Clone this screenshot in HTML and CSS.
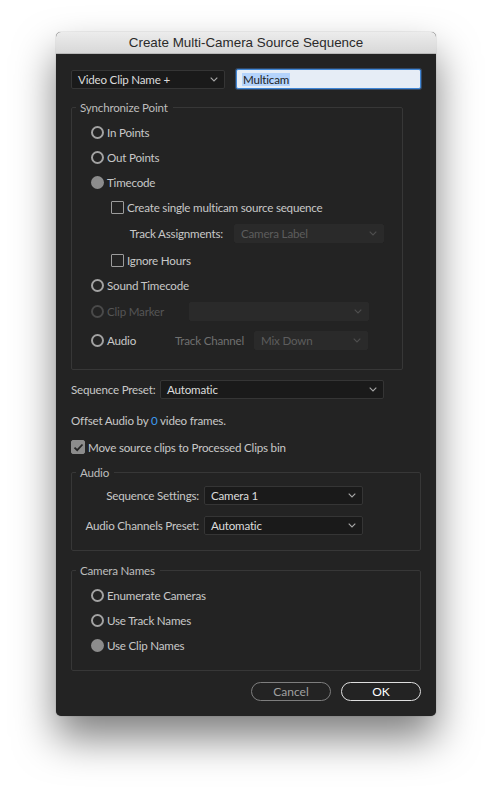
FILE: index.html
```html
<!DOCTYPE html>
<html>
<head>
<meta charset="utf-8">
<link rel="stylesheet" href="styles.css">
</head>
<body>
<div class="dialog">
  <div class="titlebar">Create Multi-Camera Source Sequence</div>
  <div class="content">
    <div class="toprow">
      <div class="select sel-name"><span>Video Clip Name +</span><svg class="chev" width="8" height="5" viewBox="0 0 8 5"><path d="M0.7 0.7 L4 4 L7.3 0.7"/></svg></div>
      <div class="textfield"><span class="hl">Multicam</span></div>
    </div>

    <div class="group sync">
      <span class="legend">Synchronize Point</span>
      <div class="row r25"><span class="radio"></span><span class="lbl">In Points</span></div>
      <div class="row r25"><span class="radio"></span><span class="lbl">Out Points</span></div>
      <div class="row r25"><span class="radio on"></span><span class="lbl">Timecode</span></div>
      <div class="row r25 indent"><span class="check"></span><span class="lbl">Create single multicam source sequence</span></div>
      <div class="row r27 indent">
        <span class="lbl trk-lbl">Track Assignments:</span>
        <div class="select disabled sel-trk"><span>Camera Label</span><svg class="chev" width="8" height="5" viewBox="0 0 8 5"><path d="M0.7 0.7 L4 4 L7.3 0.7"/></svg></div>
      </div>
      <div class="row r26 indent"><span class="check"></span><span class="lbl">Ignore Hours</span></div>
      <div class="row r25"><span class="radio"></span><span class="lbl">Sound Timecode</span></div>
      <div class="row r26">
        <span class="rl w98"><span class="radio off"></span><span class="lbl dim">Clip Marker</span></span>
        <div class="select disabled sel-clip"><span></span><svg class="chev" width="8" height="5" viewBox="0 0 8 5"><path d="M0.7 0.7 L4 4 L7.3 0.7"/></svg></div>
      </div>
      <div class="row r32">
        <span class="rl w84"><span class="radio"></span><span class="lbl">Audio</span></span>
        <span class="lbl dim2 w79">Track Channel</span>
        <div class="select disabled sel-mix"><span>Mix Down</span><svg class="chev" width="8" height="5" viewBox="0 0 8 5"><path d="M0.7 0.7 L4 4 L7.3 0.7"/></svg></div>
      </div>
    </div>

    <div class="line preset">
      <span class="lbl w89">Sequence Preset:</span>
      <div class="select sel-preset"><span>Automatic</span><svg class="chev" width="8" height="5" viewBox="0 0 8 5"><path d="M0.7 0.7 L4 4 L7.3 0.7"/></svg></div>
    </div>

    <div class="line offset"><span class="lbl">Offset Audio by <span class="num">0</span> video frames.</span></div>

    <div class="line movebin"><span class="check checked"><svg width="11" height="9" viewBox="0 0 11 9"><path d="M1.5 4.6 L4.2 7.2 L9.5 1.5"/></svg></span><span class="lbl">Move source clips to Processed Clips bin</span></div>

    <div class="group audio">
      <span class="legend">Audio</span>
      <div class="frow">
        <span class="lbl flbl">Sequence Settings:</span>
        <div class="select sel-aud"><span>Camera 1</span><svg class="chev" width="8" height="5" viewBox="0 0 8 5"><path d="M0.7 0.7 L4 4 L7.3 0.7"/></svg></div>
      </div>
      <div class="frow">
        <span class="lbl flbl">Audio Channels Preset:</span>
        <div class="select sel-aud"><span>Automatic</span><svg class="chev" width="8" height="5" viewBox="0 0 8 5"><path d="M0.7 0.7 L4 4 L7.3 0.7"/></svg></div>
      </div>
    </div>

    <div class="group cams">
      <span class="legend">Camera Names</span>
      <div class="row r25"><span class="radio"></span><span class="lbl">Enumerate Cameras</span></div>
      <div class="row r25"><span class="radio"></span><span class="lbl">Use Track Names</span></div>
      <div class="row r25"><span class="radio on"></span><span class="lbl">Use Clip Names</span></div>
    </div>

    <div class="buttons">
      <div class="btn cancel">Cancel</div>
      <div class="btn ok">OK</div>
    </div>
  </div>
</div>
</body>
</html>
```

FILE: styles.css
```css
html, body {
  margin: 0;
  padding: 0;
  background: #ffffff;
}
body {
  width: 492px;
  height: 796px;
  overflow: hidden;
  font-family: Lato, "Open Sans", sans-serif;
  font-size: 11.6px;
  letter-spacing: -0.2px;
}
.dialog {
  margin: 32px 0 0 56px;
  width: 380px;
  height: 684px;
  background: #232323;
  border-radius: 5px;
  box-shadow: 0 22px 40px rgba(0,0,0,0.5), 0 0 1px rgba(0,0,0,0.5);
  overflow: hidden;
  display: flex;
  flex-direction: column;
}
.titlebar {
  height: 22px;
  flex: none;
  background: linear-gradient(#ececec, #d8d8d8);
  border-bottom: 1px solid #b8b8b8;
  box-sizing: border-box;
  text-align: center;
  line-height: 22px;
  font-family: "Liberation Sans", Arial, sans-serif;
  font-size: 13.4px;
  letter-spacing: 0;
  color: #2a2a2a;
}
.content {
  padding: 15px 15px 0 15px;
  display: flex;
  flex-direction: column;
}
.toprow {
  display: flex;
  align-items: center;
  height: 20px;
}
.select {
  box-sizing: border-box;
  height: 19px;
  background: #1a1a1a;
  border: 1px solid #353535;
  border-radius: 2px;
  display: flex;
  align-items: center;
  justify-content: space-between;
  padding: 0 6px 0 6px;
  color: #dcdcdc;
}
.select span { white-space: nowrap; }
.chev { flex: none; }
.chev path {
  fill: none;
  stroke: #a8a8a8;
  stroke-width: 1.1;
}
.select.disabled {
  background: #2a2a2a;
  border-color: #2a2a2a;
  color: #5d5d5d;
}
.select.disabled .chev path { stroke: #4f4f4f; }
.sel-name { width: 154px; }
.textfield {
  box-sizing: border-box;
  margin-left: 11px;
  width: 185px;
  height: 20px;
  background: #e6edf6;
  border: 1px solid #3f86d6;
  border-radius: 2px;
  box-shadow: 0 0 0 1px rgba(80,140,220,0.35);
  display: flex;
  align-items: center;
  padding-left: 5px;
  color: #1d1d1d;
}
.hl { background: #b4d3fb; padding: 0 1px; }

.group {
  position: relative;
  box-sizing: border-box;
  border: 1px solid #373737;
  border-radius: 2px;
  display: flex;
  flex-direction: column;
}
.legend {
  position: absolute;
  top: -8px;
  left: 4px;
  padding: 0 5px 0 4px;
  background: #232323;
  color: #bdbdbd;
  line-height: 15px;
}
.sync {
  margin-top: 18px;
  width: 332px;
  height: 263px;
  padding: 12px 0 0 19px;
}
.row {
  display: flex;
  align-items: center;
}
.r25 { height: 25px; }
.r26 { height: 26px; }
.r27 { height: 27px; }
.r32 { height: 32px; }
.indent { padding-left: 20px; }
.lbl {
  color: #c8c8c8;
  white-space: nowrap;
}
.dim { color: #555555; }
.dim2 { color: #707070; }
.radio {
  flex: none;
  box-sizing: border-box;
  width: 13px;
  height: 13px;
  border-radius: 50%;
  border: 2px solid #a2a2a2;
  margin-right: 3px;
}
.radio.on {
  background: #8c8c8c;
  border-color: #8c8c8c;
}
.radio.off { border-color: #4a4a4a; }
.check {
  flex: none;
  box-sizing: border-box;
  width: 13px;
  height: 13px;
  border: 1.5px solid #9c9c9c;
  border-radius: 1px;
  margin-right: 3px;
  display: flex;
  align-items: center;
  justify-content: center;
}
.check.checked {
  width: 14px;
  height: 14px;
  background: #8c8c8c;
  border-color: #8c8c8c;
  border-radius: 2px;
}
.check svg path {
  fill: none;
  stroke: #262626;
  stroke-width: 1.8;
}
.trk-lbl {
  width: 112px;
  text-align: right;
  box-sizing: border-box;
  padding-right: 0;
}
.sel-trk { margin-left: 11px; width: 150px; }
.rl { display: flex; align-items: center; }
.w98 { width: 98px; }
.w84 { width: 84px; }
.w79 { width: 79px; }
.w89 { width: 89px; }
.sel-clip { width: 180px; height: 19px; }
.sel-mix { width: 114px; }

.line {
  display: flex;
  align-items: center;
}
.preset { margin-top: 10px; height: 19px; }
.sel-preset { width: 224px; }
.offset { margin-top: 11px; height: 20px; }
.num { color: #3d9af0; }
.movebin { margin-top: 7px; height: 20px; }

.audio {
  margin-top: 15px;
  width: 350px;
  height: 79px;
  padding-top: 13px;
  gap: 11px;
}
.frow {
  display: flex;
  align-items: center;
  height: 19px;
}
.flbl {
  width: 127px;
  text-align: right;
  margin-right: 5px;
}
.sel-aud { width: 159px; }

.cams {
  margin-top: 19px;
  width: 350px;
  height: 101px;
  padding: 12px 0 0 19px;
}

.buttons {
  margin-top: 11px;
  display: flex;
  justify-content: flex-end;
  gap: 10px;
}
.btn {
  box-sizing: border-box;
  width: 80px;
  height: 19px;
  border-radius: 10px;
  display: flex;
  align-items: center;
  justify-content: center;
  font-size: 12px;
  letter-spacing: 0;
}
.cancel {
  border: 1.5px solid #7e7e7e;
  color: #a0a0a0;
}
.ok {
  border: 1.5px solid #dedede;
  color: #ffffff;
}
```
